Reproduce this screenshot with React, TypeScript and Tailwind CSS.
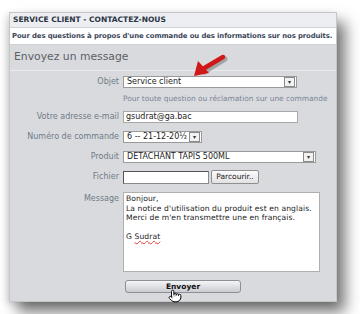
import { Pointer } from "lucide-react";

function SelectBox({ value, width }: { value: string; width: string }) {
  return (
    <div className={`flex items-center h-[12px] ${width} bg-white border border-[#9a9a9a]`}>
      <span className="flex-1 overflow-hidden whitespace-nowrap pl-[3px] leading-[10px]">{value}</span>
      <span className="flex justify-center items-center w-[11px] h-[10px] mr-[1px] border border-[#8a8a8a] bg-[#f2f2f2] text-[6px] leading-none text-[#333]">
        ▾
      </span>
    </div>
  );
}

function Row({ label, children, className = "" }: { label: string; children: React.ReactNode; className?: string }) {
  return (
    <div className={`flex items-center gap-[4px] ${className}`}>
      <span className="w-[109px] shrink-0 text-right text-[#6f7a88]">{label}</span>
      {children}
    </div>
  );
}

export default function App() {
  return (
    <div
      className="w-[360px] h-[314px] bg-white overflow-hidden pt-[12px] pl-[9px]"
      style={{ fontFamily: "'DejaVu Sans', Verdana, sans-serif" }}
    >
      <div className="relative w-[328px] h-[290px] bg-[#d9dadd] border border-[#c4c6ca] shadow-[8px_10px_14px_rgba(0,0,0,0.55),-3px_2px_6px_rgba(0,0,0,0.12)] text-[8px]">
        <div className="flex items-center h-[15px] px-[3px] bg-[#eceef2] border-b border-[#d0d3d8] font-bold text-[7.5px] text-[#2a3442]">
          SERVICE CLIENT - CONTACTEZ-NOUS
        </div>
        <div className="flex items-center h-[17px] px-[2px] bg-white border-b border-[#cfd2d7] font-bold text-[6.9px] text-[#3a4658] whitespace-nowrap tracking-[-0.1px]">
          Pour des questions à propos d'une commande ou des informations sur nos produits.
        </div>
        <div className="flex items-center h-[26px] px-[4px] border-b border-[#eaebee] text-[10.8px] text-[#5a5f66]">
          Envoyez un message
        </div>

        <div className="flex flex-col text-[#222]">
          <Row label="Objet" className="mt-[5px]">
            <SelectBox value="Service client" width="w-[174px]" />
          </Row>
          <div className="mt-[5px] pl-[113px] text-[#7a8698] text-[7.4px] h-[12px] leading-[12px] whitespace-nowrap">
            Pour toute question ou réclamation sur une commande
          </div>
          <Row label="Votre adresse e-mail" className="mt-[6px]">
            <div className="h-[12px] w-[175px] bg-white border border-[#a8a8a8] pl-[2px] leading-[10px]">gsudrat@ga.bac</div>
          </Row>
          <Row label="Numéro de commande" className="mt-[8px]">
            <SelectBox value="6 -- 21-12-20½" width="w-[79px]" />
          </Row>
          <Row label="Produit" className="mt-[8px]">
            <SelectBox value="DETACHANT TAPIS 500ML" width="w-[193px]" />
          </Row>
          <Row label="Fichier" className="mt-[7px]">
            <div className="h-[13px] w-[86px] bg-white border border-[#8a8a8a] border-l-[#555] border-t-[#555]" />
            <div className="ml-[-2px] flex items-center justify-center h-[14px] w-[48px] rounded-[2px] border border-[#8f8f8f] bg-gradient-to-b from-[#fbfbfb] to-[#e2e2e2] text-[7.5px] text-[#222]">
              Parcourir..
            </div>
          </Row>
          <div className="mt-[8px] flex items-start gap-[4px]">
            <span className="w-[109px] shrink-0 text-right text-[#6f7a88] mt-[1px]">Message</span>
            <div className="w-[197px] h-[80px] bg-white border border-[#b0b0b0] px-[2px] pt-[1px] leading-[9.6px] text-[7.6px] tracking-[0.1px] text-[#222] whitespace-nowrap">
              <div>Bonjour,</div>
              <div>La notice d'utilisation du produit est en anglais.</div>
              <div>Merci de m'en transmettre une en français.</div>
              <div>&nbsp;</div>
              <div>
                G <span className="underline decoration-wavy decoration-[#e0393e] decoration-[1px]">Sudrat</span>
              </div>
            </div>
          </div>
          <div className="mt-[8px] pl-[115px]">
            <div className="flex items-center justify-center h-[13px] w-[116px] rounded-[3px] border border-[#8c9096] bg-gradient-to-b from-[#f4f5f7] to-[#c9ccd1] font-bold text-[7.5px] text-[#111]">
              Envoyer
            </div>
          </div>
        </div>

        <Pointer className="absolute left-[158px] top-[276px] w-[14px] h-[14px] text-black fill-white" strokeWidth={1.6} />

        <svg className="absolute left-[180px] top-[38px]" width="40" height="30" viewBox="0 0 40 30">
          <line x1="33" y1="6" x2="12" y2="19" stroke="rgba(0,0,0,0.25)" strokeWidth="5" strokeLinecap="round" transform="translate(2,2)" />
          <line x1="33" y1="6" x2="11" y2="19" stroke="#d01818" strokeWidth="4.5" strokeLinecap="round" />
          <polygon points="4,25 8,10 19,22" fill="#d01818" />
        </svg>
      </div>
    </div>
  );
}
